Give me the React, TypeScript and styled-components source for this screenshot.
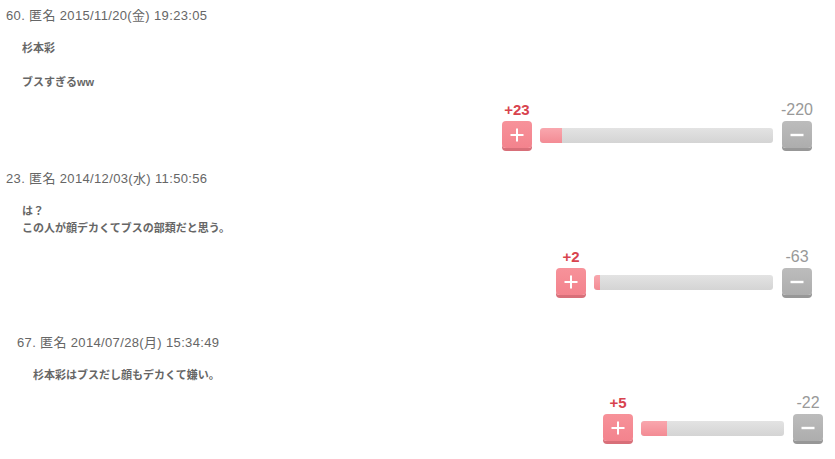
import React from "react";
import styled, { createGlobalStyle } from "styled-components";

const GlobalStyle = createGlobalStyle`
  html, body {
    margin: 0;
    padding: 0;
    background: #fff;
  }
  body {
    font-family: "Liberation Sans", "Noto Sans CJK JP", sans-serif;
  }
`;

const Page = styled.div`
  width: 835px;
  height: 459px;
  overflow: hidden;
`;

const CommentItem = styled.div<{ $shift?: number; $top: number }>`
  padding-top: ${(p) => p.$top}px;
  padding-left: ${(p) => 6 + (p.$shift || 0)}px;
  padding-right: ${(p) => 23 - (p.$shift || 0)}px;
`;

const Header = styled.div`
  font-size: 13px;
  line-height: 20px;
  letter-spacing: 0.35px;
  color: #666;
  white-space: nowrap;
`;

const Body = styled.div`
  margin-top: 14px;
  padding-left: 16px;
  font-size: 11px;
  line-height: 17px;
  font-weight: bold;
  color: #666;
`;

const Vote = styled.div<{ $gap: number }>`
  margin-top: ${(p) => p.$gap}px;
  display: flex;
  justify-content: flex-end;
  align-items: flex-end;
`;

const VoteCol = styled.div`
  display: flex;
  flex-direction: column;
  align-items: center;
  width: 30px;
`;

const Count = styled.div<{ $plus?: boolean }>`
  font-size: ${(p) => (p.$plus ? 15 : 16)}px;
  line-height: 18px;
  font-weight: ${(p) => (p.$plus ? "bold" : "normal")};
  color: ${(p) => (p.$plus ? "#d8434e" : "#999")};
  margin-bottom: 2px;
  white-space: nowrap;
`;

const VoteButton = styled.div<{ $plus?: boolean }>`
  width: 30px;
  height: 27px;
  border-radius: 4px;
  background: ${(p) =>
    p.$plus
      ? "linear-gradient(#f7929a, #f3838d)"
      : "linear-gradient(#bcbcbc, #adadad)"};
  box-shadow: 0 3px 0 ${(p) => (p.$plus ? "#d86f79" : "#979797")};
  margin-bottom: 3px;
  display: flex;
  align-items: center;
  justify-content: center;
`;

const Bar = styled.div`
  height: 15px;
  margin: 0 9px 8px 8px;
  border-radius: 3px;
  background: linear-gradient(#e3e3e3, #d4d4d4);
  overflow: hidden;
`;

const BarFill = styled.div`
  height: 100%;
  background: linear-gradient(#f9a7ae, #f38b94);
  border-radius: 3px 0 0 3px;
`;

const PlusIcon = () => (
  <svg width="14" height="14" viewBox="0 0 14 14">
    <path d="M7 0.5V13.5M0.5 7H13.5" stroke="#fff" strokeWidth="2" />
  </svg>
);

const MinusIcon = () => (
  <svg width="14" height="14" viewBox="0 0 14 14">
    <path d="M0.5 7H13.5" stroke="#fff" strokeWidth="2.4" />
  </svg>
);

type CommentData = {
  header: string;
  lines: string[];
  plus: number;
  minus: number;
  barWidth: number;
  top: number;
  voteGap: number;
  shift?: number;
};

const comments: CommentData[] = [
  {
    header: "60. 匿名 2015/11/20(金) 19:23:05",
    lines: ["杉本彩", "", "ブスすぎるww"],
    plus: 23,
    minus: 220,
    barWidth: 233,
    top: 6,
    voteGap: 10,
  },
  {
    header: "23. 匿名 2014/12/03(水) 11:50:56",
    lines: ["は？", "この人が顔デカくてブスの部類だと思う。"],
    plus: 2,
    minus: 63,
    barWidth: 179,
    top: 18,
    voteGap: 11,
  },
  {
    header: "67. 匿名 2014/07/28(月) 15:34:49",
    lines: ["杉本彩はブスだし顔もデカくて嫌い。"],
    plus: 5,
    minus: 22,
    barWidth: 143,
    top: 35,
    voteGap: 10,
    shift: 11,
  },
];

const Comment = ({ c }: { c: CommentData }) => {
  const ratio = c.plus / (c.plus + c.minus);
  return (
    <CommentItem $top={c.top} $shift={c.shift}>
      <Header>{c.header}</Header>
      <Body>
        {c.lines.map((l, i) => (
          <div key={i}>{l || "\u00a0"}</div>
        ))}
      </Body>
      <Vote $gap={c.voteGap}>
        <VoteCol>
          <Count $plus>+{c.plus}</Count>
          <VoteButton $plus>
            <PlusIcon />
          </VoteButton>
        </VoteCol>
        <Bar style={{ width: c.barWidth }}>
          <BarFill style={{ width: Math.max(5, Math.round(c.barWidth * ratio)) }} />
        </Bar>
        <VoteCol>
          <Count>-{c.minus}</Count>
          <VoteButton>
            <MinusIcon />
          </VoteButton>
        </VoteCol>
      </Vote>
    </CommentItem>
  );
};

export default function App() {
  return (
    <Page>
      <GlobalStyle />
      {comments.map((c, i) => (
        <Comment key={i} c={c} />
      ))}
    </Page>
  );
}
